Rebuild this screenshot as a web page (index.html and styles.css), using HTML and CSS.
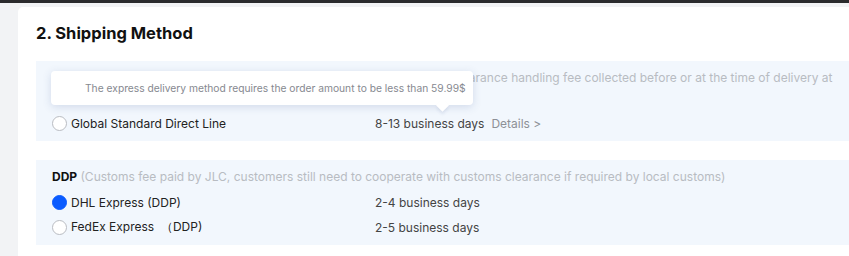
FILE: index.html
```html
<!DOCTYPE html>
<html>
<head>
  <title>Shipping Method</title>
  <link rel="stylesheet" href="styles.css">
</head>
<body>
  <div class="topbar"></div>
  <div class="page">
    <div class="card">
      <h2 class="card-title">2. Shipping Method</h2>

      <div class="group">
        <div class="group-title"><b>DAP</b> (Duties &amp; taxes not included, customers need to pay the customs clearance handling fee collected before or at the time of delivery at local customs)</div>
        <div class="option">
          <label class="option-name"><span class="radio"></span>Global Standard Direct Line</label>
          <span class="option-days">8-13 business days</span>
          <span class="option-link">Details &gt;</span>
        </div>
        <div class="tooltip">The express delivery method requires the order amount to be less than 59.99$</div>
      </div>

      <div class="group">
        <div class="group-title"><b>DDP</b> (Customs fee paid by JLC, customers still need to cooperate with customs clearance if required by local customs)</div>
        <div class="option">
          <label class="option-name"><span class="radio checked"></span>DHL Express (DDP)</label>
          <span class="option-days">2-4 business days</span>
        </div>
        <div class="option">
          <label class="option-name"><span class="radio"></span>FedEx Express &nbsp;（DDP)</label>
          <span class="option-days">2-5 business days</span>
        </div>
      </div>
    </div>
  </div>
</body>
</html>
```

FILE: styles.css
```css
body {
  margin: 0;
  font-family: Inter, "Noto Sans", Arial, sans-serif;
  background-color: #f2f3f5;
  color: #222;
  overflow: hidden;
}

.topbar {
  height: 3px;
  background-color: #2b2b2d;
}

.page {
  padding: 4px 0 0 18px;
}

.card {
  width: 860px;
  min-height: 260px;
  background-color: #fff;
  border-radius: 5px 0 0 0;
  padding: 14px 0 0 18px;
  box-sizing: border-box;
}

.card-title {
  margin: 0 0 16px 0;
  font-size: 16.5px;
  font-weight: 700;
  line-height: 24px;
  color: #111;
}

.group {
  position: relative;
  background-color: #f2f7fd;
  padding: 7px 0 5px 16px;
  margin-bottom: 19px;
}

.group-title {
  width: 800px;
  font-size: 12px;
  line-height: 20px;
  color: #b8bcc2;
  margin-bottom: 3px;
}

.group-title b {
  color: #111;
  font-weight: 700;
}

.option {
  display: flex;
  align-items: center;
  height: 25px;
  font-size: 12px;
  color: #222;
}

.option-name {
  display: flex;
  align-items: center;
  width: 323px;
}

.radio {
  width: 13px;
  height: 13px;
  border: 1px solid #b9bcc2;
  border-radius: 50%;
  background-color: #fff;
  margin-right: 4px;
  flex-shrink: 0;
}

.radio.checked {
  background-color: #0a5bff;
  border-color: #0a5bff;
}

.option-days {
  color: #444;
}

.option-link {
  color: #8d9096;
  margin-left: 7px;
}

.tooltip {
  position: absolute;
  left: 15px;
  top: 10px;
  width: 422px;
  height: 34px;
  box-sizing: border-box;
  padding: 0 0 0 34px;
  line-height: 34px;
  font-size: 10.25px;
  white-space: nowrap;
  color: #868990;
  background-color: #fff;
  border-radius: 4px;
  box-shadow: 0 2px 8px rgba(60, 90, 150, 0.18);
}

.tooltip::after {
  content: "";
  position: absolute;
  left: 387px;
  bottom: -5px;
  width: 9px;
  height: 9px;
  background-color: #fff;
  transform: rotate(45deg);
  box-shadow: 2px 2px 3px rgba(60, 90, 150, 0.1);
}
```
